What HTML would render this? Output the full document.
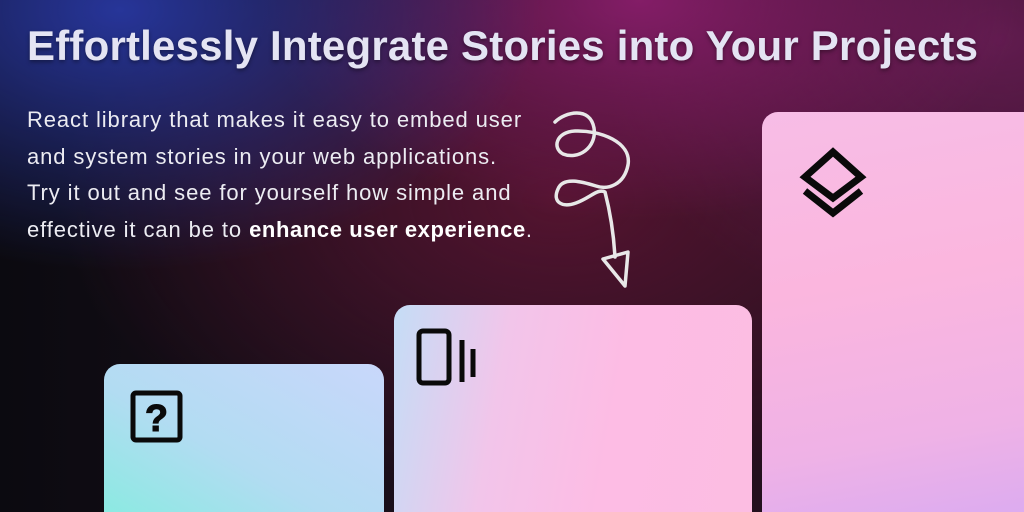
<!DOCTYPE html>
<html style="width:1024px;height:512px;overflow:hidden"><head><meta charset="utf-8"><style>
html,body{margin:0;padding:0}
body{width:1024px;height:512px;overflow:hidden;position:relative;font-family:"Liberation Sans",sans-serif;
background:
radial-gradient(ellipse 420px 260px at 120px 10px, rgba(40,55,160,0.95), rgba(40,55,160,0) 100%),
radial-gradient(ellipse 380px 220px at 640px 0px, rgba(140,30,110,0.9), rgba(140,30,110,0) 100%),
radial-gradient(ellipse 400px 300px at 1000px 40px, rgba(110,30,90,0.8), rgba(110,30,90,0) 100%),
radial-gradient(ellipse 500px 300px at 560px 200px, rgba(90,20,50,0.9), rgba(90,20,50,0) 100%),
linear-gradient(90deg,#0b0a10 0%,#1a0f1a 40%,#2a1020 100%);}
h1{position:absolute;left:27px;top:22px;margin:0;font-size:42px;font-weight:bold;color:#e4e4f3;letter-spacing:0.2px;white-space:nowrap;text-shadow:0 2px 4px rgba(0,0,0,.4)}
p{position:absolute;left:27px;top:102px;margin:0;font-size:22px;line-height:36.5px;letter-spacing:0.9px;color:#ececf2;width:600px;white-space:nowrap}
p b{color:#fff;letter-spacing:0.6px}
.card{position:absolute;border-radius:16px;overflow:hidden}
.c1{left:104px;top:364px;width:280px;height:170px;background:linear-gradient(30deg,#85ecdf 0%,#b2dcf2 45%,#c9d7fb 100%)}
.c2{left:394px;top:305px;width:358px;height:230px;background:linear-gradient(100deg,#c4ddf6 0%,#f2c5ea 30%,#fdbce4 60%,#fcbde2 100%)}
.c3{left:762px;top:112px;width:280px;height:420px;background:linear-gradient(170deg,#f7bde6 0%,#fbb6de 40%,#efb2e6 75%,#d8aaf2 100%)}
svg{position:absolute}
</style></head><body>
<h1>Effortlessly Integrate Stories into Your Projects</h1>
<p>React library that makes it easy to embed user<br>and system stories in your web applications.<br>Try it out and see for yourself how simple and<br>effective it can be to <b>enhance user experience</b>.</p>
<svg width="1024" height="512" style="left:0;top:0">
<path d="M555,122 C565,112 590,106 594,128 C597,148 578,160 563,154 C552,148 556,132 575,131 C600,130 632,142 628,165 C624,185 608,190 596,186 C583,182 563,176 558,189 C552,202 562,208 576,203 C590,198 598,188 605,192 C611,215 614,240 615,257" fill="none" stroke="#e8e8e8" stroke-width="3.5" stroke-linecap="round" stroke-linejoin="round"/>
<path d="M603,259 L628,252 L625,286 Z" fill="none" stroke="#e8e8e8" stroke-width="3.5" stroke-linejoin="round"/>
</svg>
<div class="card c1"></div>
<div class="card c2"></div>
<div class="card c3"></div>
<svg width="60" height="60" style="left:127px;top:387px" viewBox="0 0 60 60">
<rect x="6" y="6" width="47" height="47" rx="3" fill="none" stroke="#0a0a0a" stroke-width="5"/>
<text x="29.5" y="44" text-anchor="middle" font-family="Liberation Sans" font-weight="bold" font-size="38" fill="#0a0a0a" stroke="#0a0a0a" stroke-width="1">?</text>
</svg>
<svg width="70" height="70" style="left:410px;top:322px" viewBox="0 0 70 70">
<rect x="9" y="9" width="30" height="52" rx="4" fill="none" stroke="#0a0a0a" stroke-width="5"/>
<path d="M52,18 V60 M63,27 V55" stroke="#0a0a0a" stroke-width="5"/>
</svg>
<svg width="80" height="80" style="left:793px;top:140px" viewBox="0 0 80 80">
<path d="M40,12 L68,37 L40,58 L12,37 Z" fill="none" stroke="#0a0a0a" stroke-width="7" stroke-linejoin="miter"/>
<path d="M12,51 L40,73 L68,51" fill="none" stroke="#0a0a0a" stroke-width="7"/>
</svg>
</body></html>
